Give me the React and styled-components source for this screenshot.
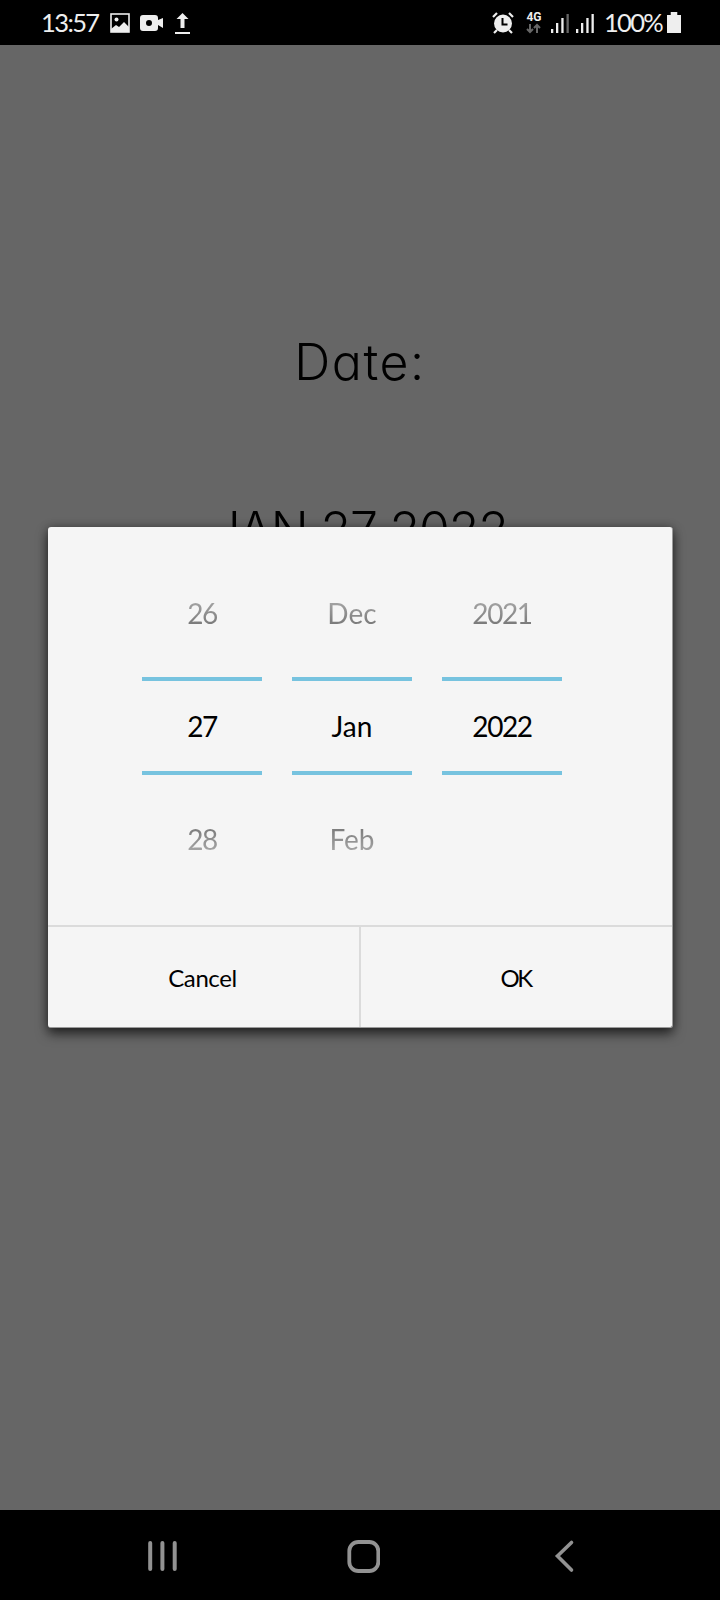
import React from "react";
import styled, { createGlobalStyle } from "styled-components";

const GlobalStyle = createGlobalStyle`
  * { box-sizing: border-box; }
  body { margin: 0; background: #000; }
`;

const Screen = styled.div`
  width: 720px;
  height: 1600px;
  display: flex;
  flex-direction: column;
  overflow: hidden;
  background: #666;
  font-family: Lato, "Liberation Sans", sans-serif;
`;

const StatusBar = styled.header`
  height: 45px;
  flex: none;
  display: flex;
  align-items: center;
  justify-content: space-between;
  padding: 0 39px 0 41px;
  background: #000;
  color: #eee;
`;

const StatusGroup = styled.div`
  display: flex;
  align-items: center;
  height: 45px;
`;

const StatusText = styled.span`
  font-size: 25.5px;
  line-height: 47px;
  width: ${(p) => p.$width}px;
  letter-spacing: ${(p) => p.$track}px;
  white-space: nowrap;
`;

const Glyph = styled.svg`
  display: block;
  flex: none;
  margin-left: ${(p) => p.$gap || 0}px;
`;

const Network = styled.div`
  display: flex;
  flex-direction: column;
  align-items: center;
  width: 16px;
  height: 22px;
  margin-left: 12px;
`;

const NetworkLabel = styled.span`
  font: bold 12px/11px Roboto, sans-serif;
`;

const Main = styled.main`
  position: relative;
  flex: 1;
  display: flex;
  flex-direction: column;
  align-items: center;
  padding-top: 282px;
`;

const Heading = styled.div`
  height: 70px;
  margin-bottom: 98px;
  font: 300 50px/70px Inter, sans-serif;
  font-feature-settings: "cv11";
  letter-spacing: ${(p) => p.$track}px;
  color: #000;
  white-space: nowrap;
`;

const Dialog = styled.section`
  position: absolute;
  left: 48px;
  top: 482px;
  width: 625px;
  height: 501px;
  display: flex;
  flex-direction: column;
  background: #f5f5f5;
  border: solid #9a9a9a;
  border-width: 0 1px 1px 0;
  border-radius: 3px;
  box-shadow: 0 6px 12px rgba(0, 0, 0, 0.6), 0 0 10px rgba(0, 0, 0, 0.3);
  color: #000;
`;

const Wheels = styled.div`
  flex: 1;
  display: flex;
  gap: 30px;
  padding: 30px 0 0 94px;
`;

const Wheel = styled.div`
  width: 120px;
  display: flex;
  flex-direction: column;
`;

const Option = styled.div`
  height: 120px;
  font-size: 28px;
  line-height: ${(p) => (p.$fade === "down" ? 128 : 113)}px;
  letter-spacing: ${(p) => p.$track}px;
  text-align: center;
  color: transparent;
  background: ${(p) =>
    p.$fade === "down"
      ? "linear-gradient(#6c6c6c 45px, #b4b4b4 84px)"
      : "linear-gradient(#b4b4b4 36px, #6c6c6c 75px)"};
  background-clip: text;
`;

const Selected = styled.div`
  height: 98px;
  border: solid #77c3df;
  border-width: 4px 0;
  font-size: 28px;
  line-height: 90px;
  letter-spacing: ${(p) => p.$track}px;
  text-align: center;
`;

const Actions = styled.footer`
  display: flex;
  height: 102px;
  border-top: 2px solid #dbdbdb;
`;

const Action = styled.button`
  flex: 0 0 ${(p) => p.$width}px;
  padding: 0 2px 0 0;
  border: 0;
  border-right: ${(p) => (p.$divided ? "2px solid #dbdbdb" : "0")};
  background: none;
  color: #000;
  font: 24px/102px Lato, sans-serif;
  letter-spacing: ${(p) => p.$track}px;
`;

const NavBar = styled.nav`
  height: 90px;
  flex: none;
  display: flex;
  align-items: center;
  padding: 1px 0 0 146px;
  background: #000;
`;

const wheels = [
  { values: ["26", "27", "28"], track: -1.4 },
  { values: ["Dec", "Jan", "Feb"], track: 0 },
  { values: ["2021", "2022", ""], track: -1.4 },
];

export default function App() {
  return (
    <Screen>
      <GlobalStyle />
      <StatusBar>
        <StatusGroup>
          <StatusText $width={69} $track={-1.6}>13:57</StatusText>
          <Glyph width="20" height="20" viewBox="0 0 20 20">
            <rect x="1" y="1" width="18" height="18" fill="none" stroke="#eee" strokeWidth="1.6" />
            <circle cx="6.5" cy="6.5" r="2" fill="#eee" />
            <path d="M1 16l5-4 3 2 5-5 5 5v5H1z" fill="#eee" />
          </Glyph>
          <Glyph $gap={10} width="24" height="18" viewBox="0 0 24 18">
            <path fillRule="evenodd" fill="#eee" d="M3 1h12q3 0 3 3v2l5-2v10l-5-3v3q0 3-3 3H3q-3 0-3-3V4q0-3 3-3zM9 6a3 3 0 1 0 0 6a3 3 0 1 0 0-6z" />
          </Glyph>
          <Glyph $gap={10} width="17" height="22" viewBox="0 0 17 22">
            <path fill="#eee" d="M8.5 1l6 6h-4v9h-4V7h-4zM1 20h15v2H1z" />
          </Glyph>
        </StatusGroup>
        <StatusGroup>
          <Glyph width="22" height="22" viewBox="0 0 22 22">
            <circle cx="11" cy="11.5" r="9" fill="#eee" />
            <path d="M1 5l4-4M21 5l-4-4M5 18l-3 3M17 18l3 3" stroke="#eee" strokeWidth="2.2" />
            <path d="M10.5 6v6.5h5" fill="none" stroke="#000" strokeWidth="2" />
          </Glyph>
          <Network>
            <NetworkLabel>4G</NetworkLabel>
            <svg width="16" height="11" viewBox="0 0 16 11">
              <path d="M4 1v7M1 6l3 3 3-3M11 10V3M8 5l3-3 3 3" fill="none" stroke="#666" strokeWidth="2" />
            </svg>
          </Network>
          <Glyph $gap={9} width="19" height="20" viewBox="0 0 19 20">
            <path fill="#eee" d="M0 16h2.3v4H0zM5 10h2.3v10H5zM10.3 5h2.3v15h-2.3z" />
            <path fill="#666" d="M15.5 1h2.3v19h-2.3z" />
          </Glyph>
          <Glyph $gap={6} width="19" height="20" viewBox="0 0 19 20">
            <path fill="#eee" d="M0 16h2.3v4H0zM5 10h2.3v10H5zM10.3 5h2.3v15h-2.3zM15.5 1h2.3v19h-2.3z" />
          </Glyph>
          <Glyph width="9" height="20" />
          <StatusText $width={63} $track={-1.7}>100%</StatusText>
          <Glyph width="14" height="21" viewBox="0 0 15 21" preserveAspectRatio="none">
            <path fill="#eee" d="M4 0h7v3h4v18H0V3h4z" />
          </Glyph>
        </StatusGroup>
      </StatusBar>
      <Main>
        <Heading $track={1.6}>Date:</Heading>
        <Heading $track={-1.2}>JAN 27 2022</Heading>
        <Dialog>
          <Wheels>
            {wheels.map(({ values, track }) => (
              <Wheel key={values[1]}>
                <Option $fade="up" $track={track}>{values[0]}</Option>
                <Selected $track={track}>{values[1]}</Selected>
                <Option $fade="down" $track={track}>{values[2]}</Option>
              </Wheel>
            ))}
          </Wheels>
          <Actions>
            <Action $width={313} $track={-0.4} $divided>Cancel</Action>
            <Action $width={311} $track={-2.5}>OK</Action>
          </Actions>
        </Dialog>
      </Main>
      <NavBar>
        <Glyph width="34" height="34" viewBox="0 0 34 34">
          <path d="M4.2 4v26M16.4 4v26M28.7 4v26" stroke="#929292" strokeWidth="4" strokeLinecap="round" />
        </Glyph>
        <Glyph $gap={166} width="34" height="34" viewBox="0 0 34 34">
          <rect x="3.3" y="3" width="29" height="29" rx="9" fill="none" stroke="#929292" strokeWidth="3.8" />
        </Glyph>
        <Glyph $gap={173} width="22" height="34" viewBox="0 0 22 34">
          <path d="M18.5 3.5L4.5 17l14 14" fill="none" stroke="#929292" strokeWidth="3.6" strokeLinecap="round" />
        </Glyph>
      </NavBar>
    </Screen>
  );
}
